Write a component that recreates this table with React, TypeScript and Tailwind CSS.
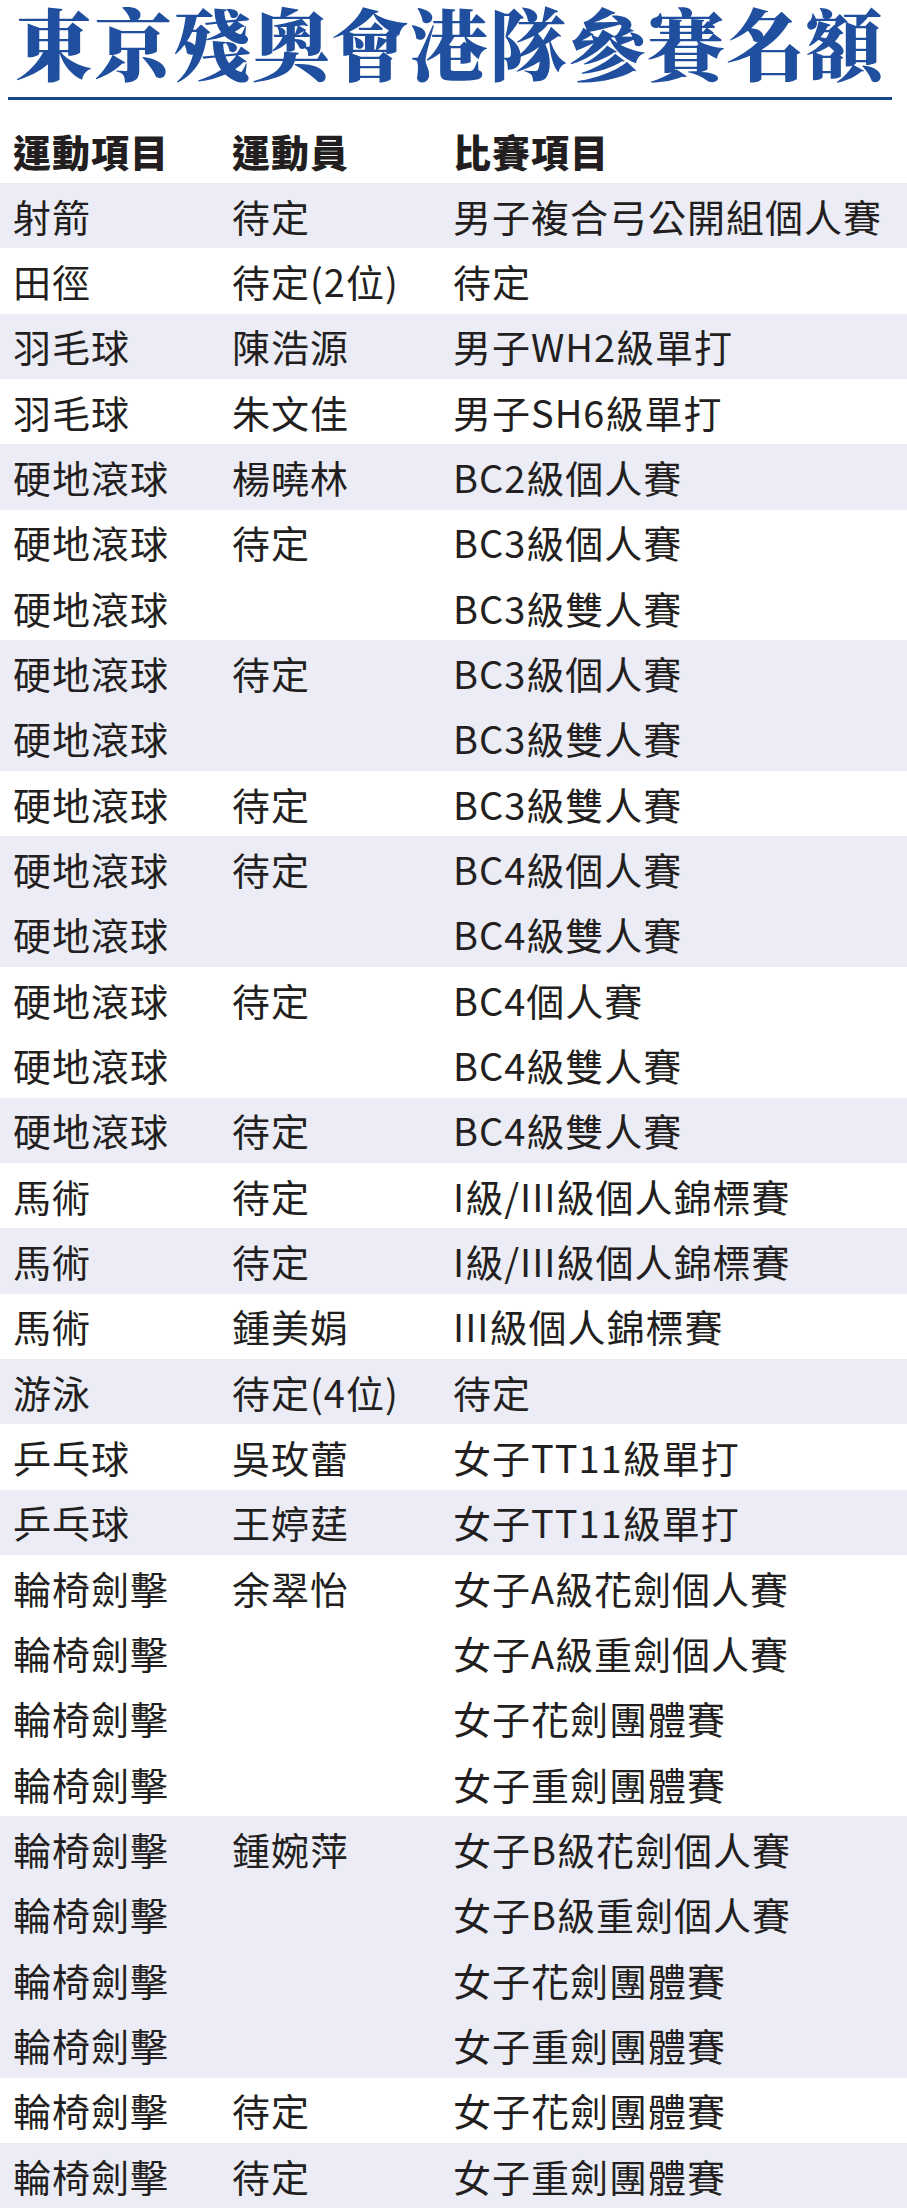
import { Fragment } from 'react';

type Row = { sport: string; athlete: string; event: string; shade: boolean };

// [sport, athlete, event] grouped by entry: rows in one group share the stripe
const GROUPS: [string, string, string][][] = [
  [['射箭', '待定', '男子複合弓公開組個人賽']],
  [['田徑', '待定(2位)', '待定']],
  [['羽毛球', '陳浩源', '男子WH2級單打']],
  [['羽毛球', '朱文佳', '男子SH6級單打']],
  [['硬地滾球', '楊曉林', 'BC2級個人賽']],
  [
    ['硬地滾球', '待定', 'BC3級個人賽'],
    ['硬地滾球', '', 'BC3級雙人賽'],
  ],
  [
    ['硬地滾球', '待定', 'BC3級個人賽'],
    ['硬地滾球', '', 'BC3級雙人賽'],
  ],
  [['硬地滾球', '待定', 'BC3級雙人賽']],
  [
    ['硬地滾球', '待定', 'BC4級個人賽'],
    ['硬地滾球', '', 'BC4級雙人賽'],
  ],
  [
    ['硬地滾球', '待定', 'BC4個人賽'],
    ['硬地滾球', '', 'BC4級雙人賽'],
  ],
  [['硬地滾球', '待定', 'BC4級雙人賽']],
  [['馬術', '待定', 'I級/III級個人錦標賽']],
  [['馬術', '待定', 'I級/III級個人錦標賽']],
  [['馬術', '鍾美娟', 'III級個人錦標賽']],
  [['游泳', '待定(4位)', '待定']],
  [['乒乓球', '吳玫蕾', '女子TT11級單打']],
  [['乒乓球', '王婷莛', '女子TT11級單打']],
  [
    ['輪椅劍擊', '余翠怡', '女子A級花劍個人賽'],
    ['輪椅劍擊', '', '女子A級重劍個人賽'],
    ['輪椅劍擊', '', '女子花劍團體賽'],
    ['輪椅劍擊', '', '女子重劍團體賽'],
  ],
  [
    ['輪椅劍擊', '鍾婉萍', '女子B級花劍個人賽'],
    ['輪椅劍擊', '', '女子B級重劍個人賽'],
    ['輪椅劍擊', '', '女子花劍團體賽'],
    ['輪椅劍擊', '', '女子重劍團體賽'],
  ],
  [['輪椅劍擊', '待定', '女子花劍團體賽']],
  [['輪椅劍擊', '待定', '女子重劍團體賽']],
];

const ROWS: Row[] = GROUPS.flatMap((group, i) =>
  group.map(([sport, athlete, event]) => ({ sport, athlete, event, shade: i % 2 === 0 }))
);

const SANS = "font-['Noto_Sans_CJK_TC','Noto_Sans_CJK_SC',sans-serif]";

function TableRow({ row }: { row: Row }) {
  return (
    <div
      className={`flex h-[65.33px] items-center text-[38px] leading-none tracking-[1px] text-[#231f20] ${
        row.shade ? 'bg-[#ebecf5]' : 'bg-white'
      }`}
    >
      <span className="w-[232px] shrink-0 pl-[13px]">{row.sport}</span>
      <span className="w-[221px] shrink-0">{row.athlete}</span>
      <span>{row.event}</span>
    </div>
  );
}

export default function App() {
  return (
    <div className={`w-[907px] bg-white ${SANS}`}>
      <h1 className="h-[97px] pl-[15px] font-['Noto_Serif_CJK_TC','Noto_Serif_TC','Noto_Sans_CJK_TC',serif] text-[78px] font-black leading-[82px] tracking-[1px] text-[#1f4f9e]">
        東京殘奧會港隊參賽名額
      </h1>
      <div className="ml-2 h-[3px] w-[884px] bg-[#17468f]" />

      <div className="mt-[18px] flex h-[65px] items-center text-[38px] font-black leading-none tracking-[1px] text-[#231f20]">
        <span className="w-[232px] shrink-0 pl-[13px]">運動項目</span>
        <span className="w-[221px] shrink-0">運動員</span>
        <span>比賽項目</span>
      </div>

      <div>
        {ROWS.map((row, i) => (
          <Fragment key={i}>
            <TableRow row={row} />
          </Fragment>
        ))}
      </div>
    </div>
  );
}
